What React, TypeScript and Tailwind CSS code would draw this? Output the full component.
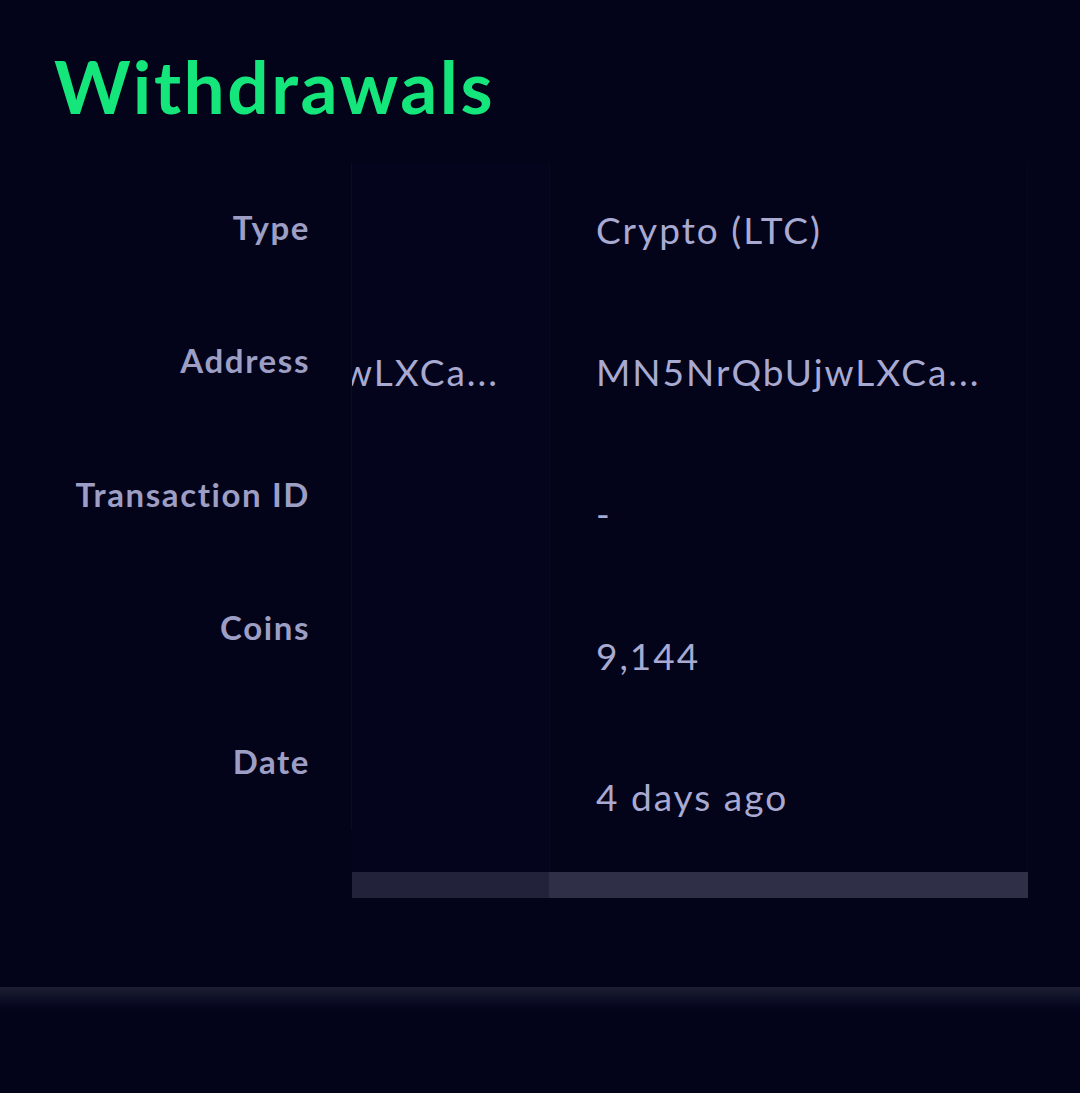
const rows = [
  { label: "Type", value: "Crypto (LTC)", peek: "" },
  { label: "Address", value: "MN5NrQbUjwLXCa...", peek: "MN5NrQbUjwLXCa..." },
  { label: "Transaction ID", value: "-", peek: "" },
  { label: "Coins", value: "9,144", peek: "" },
  { label: "Date", value: "4 days ago", peek: "" },
];

export default function App() {
  return (
    <div className="w-[1080px] h-[1093px] bg-[#03031a] flex flex-col overflow-hidden" style={{ fontFamily: "Lato, 'Noto Sans', sans-serif" }}>
      <h1 className="pl-[54px] pt-[50px] h-[163px] text-[73px] leading-[1] font-bold text-[#14e67b] tracking-[2.5px]">
        Withdrawals
      </h1>

      <div className="flex pl-[52px] pr-[52px]">
        {/* sticky labels */}
        <div className="w-[300px] h-[667px] flex flex-col border-r border-[#0b0c24]">
          {rows.map((r) => (
            <div key={r.label} className="h-[133.4px] flex items-center justify-end pr-[41px] pb-[4px]">
              <span className="text-[33px] font-bold text-[#9c9ec4] tracking-[1.6px]">{r.label}</span>
            </div>
          ))}
        </div>

        {/* scroll area */}
        <div className="flex flex-col w-[676px]">
          <div className="flex h-[709px]">
            <div className="w-[197px] bg-[#04051d] flex flex-col overflow-hidden">
              {rows.map((r) => (
                <div key={r.label} className="h-[141.8px] flex items-center justify-end pr-[50px] pb-[8px] overflow-hidden">
                  <span className="text-[37px] whitespace-nowrap text-[#a8aad2] tracking-[2px] shrink-0">{r.peek}</span>
                </div>
              ))}
            </div>
            <div className="flex-1 flex flex-col border-l border-[#090a22] border-r border-r-[#07081f]">
              {rows.map((r) => (
                <div key={r.label} className="h-[141.8px] flex items-center pl-[46px] pb-[8px]">
                  <span className="text-[37px] text-[#a8aad2] tracking-[2px] whitespace-nowrap">{r.value}</span>
                </div>
              ))}
            </div>
          </div>
          <div className="flex h-[26px]">
            <div className="w-[197px] bg-[#22233a]" />
            <div className="flex-1 bg-[#2f2f48]" />
          </div>
        </div>
      </div>

      <div className="mt-[89px] h-[24px] bg-gradient-to-b from-[#1d1e33] to-[#03031a]" />
    </div>
  );
}
